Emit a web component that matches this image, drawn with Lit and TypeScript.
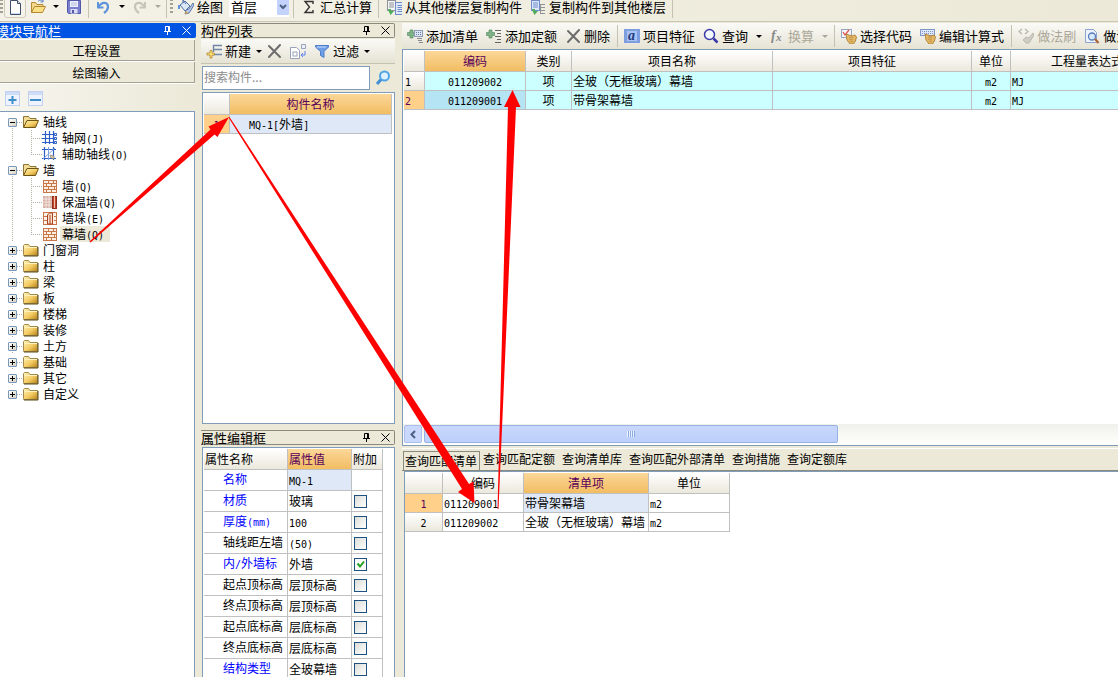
import { LitElement, html, svg, css, nothing } from "lit";
import { customElement, property } from "lit/decorators.js";
import { classMap } from "lit/directives/class-map.js";

/** Half-width runs are set in a narrow monospace so codes line up like a grid. */
const mix = (s: string) =>
  s.split(/([\x21-\x7e]+)/).map((p) => (/^[\x21-\x7e]/.test(p) ? html`<span class="lat">${p}</span>` : p));

const bricks = (stroke: string) => svg`
  <rect x="1.5" y="2.5" width="13" height="12" fill="#fdeee2" stroke=${stroke}/>
  <path d="M1 5.5h14M1 8.5h14M1 11.5h14M6.5 3v2.5M11.5 3v2.5M4.5 6v2.5M9.5 6v2.5M6.5 9v2.5M12.5 9v2.5M4.5 12v2.5M9.5 12v2.5" stroke=${stroke} fill="none"/>`;

const rows = (x: number, y: number) => svg`
  <rect x=${x} y=${y} width="8" height="12" fill="#dfe8f8" stroke="#6f8cc8"/>
  <path d="M${x + 2} ${y + 3}h5M${x + 2} ${y + 5}h5M${x + 2} ${y + 7}h5M${x + 2} ${y + 9}h5" stroke="#6f8cc8"/>`;

const hand = svg`
  <path d="M5 6l3 1 3 1 3-1 1.500 2-1 4-2 3H9L6 12z" fill="#e3b765" stroke="#a87a2c" stroke-width=".8"/>
  <path d="M8 9l4 1M8 11l4 1M9 13l3 1" stroke="#b98a3a" stroke-width=".7"/>`;

const plusGreen = svg`<path d="M3 2h3v2.500h2.500v3H6V10H3V7.500H.5v-3H3z" fill="#7fb287" stroke="#5b8f66" stroke-width=".7"/>`;

const icons: Record<string, unknown> = {
  new: svg`<path d="M3.500 1.500h7l3 3v11h-10z" fill="#fff" stroke="#40506c"/><path d="M10.500 1.500v3h3" fill="#cfe0f4" stroke="#40506c"/><path d="M4 14h9v1H4z" fill="#c7dcf3"/>`,
  open: svg`<path d="M1.500 13.500v-10h4l1.500 2h6v3" fill="#f6d98c" stroke="#b58a35"/><path d="M1.500 13.500l3-6h11l-3 6z" fill="#fbdf85" stroke="#b58a35"/><path d="M8 2.500c2-2 4-1.500 5 0M13 .5v2.500h-2.500" fill="none" stroke="#5c80c0"/>`,
  save: svg`<path d="M1.500 1.500h13v13h-12l-1-1z" fill="#7a7fd0" stroke="#5257a8"/><rect x="4" y="2" width="8" height="6" fill="#eef1fb"/><path d="M5 4h6M5 6h6" stroke="#b3bce0"/><rect x="4.500" y="10" width="7" height="4.500" fill="#d9dcf2"/><rect x="6" y="11" width="2" height="3" fill="#5257a8"/>`,
  undo: svg`<path d="M2 3v5.500h5.500" fill="none" stroke="#5f93dc" stroke-width="2"/><path d="M2.500 8C6 2 12 3 12 8c0 3-2 4.500-4 6" fill="none" stroke="#5f93dc" stroke-width="2.200"/>`,
  redo: svg`<path d="M13 3v5.500H7.500" fill="none" stroke="#c6c5ba" stroke-width="2"/><path d="M12.500 8C9 2 3 3 3 8c0 3 2 4.500 4 6" fill="none" stroke="#c6c5ba" stroke-width="2.200"/>`,
  paint: svg`<path d="M2 6l5-4 5 5-5 5z" fill="#dbe6f7" stroke="#4f6fa8"/><path d="M5 4V1l3 4" fill="none" stroke="#4f6fa8"/><path d="M1 6v4" stroke="#5f93dc" stroke-width="2"/><path d="M15 4l-4 6-3 1-1 4 4-1 2-3 3-5z" fill="#b9cbe8" stroke="#5c77ab"/><path d="M7 15l1-3 2 2z" fill="#e8ac36"/>`,
  sigma: svg`<path d="M12 5V2.500H4L8.500 8 4 13.500h8V11" fill="none" stroke="#333" stroke-width="1.400"/>`,
  copyFrom: svg`<rect x="1.500" y="1.500" width="8" height="10" fill="#f4f5f7" stroke="#8f9297"/><path d="M3 4h5M3 6h5M3 8h5" stroke="#8f9297"/>${rows(9.5, 3.5)}<path d="M2 10h3v2h3l-3.500 4L3 13z" fill="#4fae5b"/>`,
  copyTo: svg`<rect x="1.500" y="1.500" width="8" height="10" fill="#dce6fb" stroke="#6f8cc8"/><path d="M3 4h5M3 6h5M3 8h5" stroke="#6f8cc8"/><path d="M10 5.500h5M10 8.500h5M10 11.500h5M10 14.500h5M10.500 5v10" stroke="#8f9297"/><path d="M2 10h3v2h3l-3.500 4L3 13z" fill="#4fae5b"/>`,
  addNew: svg`<path d="M7 2.500h9M7 6.500h9M7 11.500h9M7.500 2v7" stroke="#7187a8" stroke-width="1.400"/><path d="M4 7.500h2v2.500h2.500v2H6v3H4v-3H1v-2h3z" fill="#ffe27a" stroke="#b1892f" stroke-width=".8"/>`,
  del: svg`<path d="M3 3l11 11M14 2L3 14" stroke="#6d6d6d" stroke-width="2" stroke-linecap="round"/>`,
  copyPage: svg`<path d="M.5 4.500h6l3 3v8h-9z" fill="#fff" stroke="#98a2b8"/><rect x="3" y="9" width="4" height="4" fill="none" stroke="#98a2b8"/><path d="M11.500 1.500h4v4h-4z" fill="#eef" stroke="#98a2b8"/><path d="M15 8v4h-4m2-2l-2 2 2 2" fill="none" stroke="#5b7ff0"/>`,
  filter: svg`<path d="M1.500 2.500h13v1.500L10 8.500v6L6.500 12.500v-4L1.500 4z" fill="#6f9fe6" stroke="#4d7cc6"/><path d="M3 4h9" stroke="#c9defa"/>`,
  search: svg`<circle cx="9.500" cy="6" r="4.500" fill="#dff1ff" stroke="#4fa6e6" stroke-width="2"/><path d="M6 9.500L2 14" stroke="#3f8fd6" stroke-width="3"/>`,
  addList: svg`${plusGreen}<rect x="7.500" y="2.500" width="8" height="6" fill="#dce5f3" stroke="#8c9bb5"/><path d="M9 4.500h1M11 4.500h1M13 4.500h1M9 6.500h1M11 6.500h1M13 6.500h1" stroke="#6b7c9c"/><path d="M10 10.500h5M11 12.500h4M12 14.500h4" stroke="#8a8a8a"/>`,
  addQuota: svg`${plusGreen}<path d="M9 2.500h6M11 5.500h4M9 8.500h6M11 11.500h4M9 14.500h6" stroke="#666"/>`,
  feature: svg`<rect x="0" y="1" width="16" height="14" fill="#7d9fe0"/><rect x="3" y="3" width="10" height="10" fill="#a9c3f4"/><text x="4" y="12" font-family="Liberation Serif, serif" font-style="italic" font-weight="bold" font-size="14" fill="#1f3b80">a</text>`,
  query: svg`<circle cx="6.500" cy="6.500" r="5" fill="#f4f8ff" stroke="#3a3aa8" stroke-width="1.500"/><path d="M10.500 10.500l4 4" stroke="#3a3aa8" stroke-width="2.500"/>`,
  fx: svg`<text x="2" y="12" font-family="Liberation Serif, serif" font-style="italic" font-weight="bold" font-size="14" fill="#8a8a8a">f</text><text x="7" y="13" font-family="Liberation Serif, serif" font-style="italic" font-weight="bold" font-size="11" fill="#8a8a8a">x</text>`,
  pick: svg`<rect x=".5" y="1.500" width="10" height="8" fill="#f3f5fa" stroke="#9aa6c0"/><path d="M2 4l2 3 4-5" fill="none" stroke="#e0554a" stroke-width="1.300"/>${hand}`,
  edit: svg`<rect x=".5" y="1.500" width="14" height="6" fill="#dfe8fa" stroke="#7f97c8"/><path d="M2 3.500h11M2 5.500h11" stroke="#7f97c8" stroke-dasharray="1 1"/>${hand}`,
  brush: svg`<path d="M4 1L1 3.500 4 6M7 1l3 2.500L7 6" fill="none" stroke="#b9b8ae" stroke-width="1.300"/><path d="M15 5l-4 5-3-1-3 3 3 3h3l2-3 3-5z" fill="#cfcec4" stroke="#b9b8ae"/>`,
  preview: svg`<path d="M1.500 1.500h8l3 3v10h-11z" fill="#eef4fd" stroke="#8ca4cf"/><circle cx="8" cy="8.500" r="3.500" fill="#d7ebff" stroke="#5a7cb8" stroke-width="1.300"/><path d="M11 11l3.500 4" stroke="#b0632e" stroke-width="2"/>`,
  plusBox: svg`<rect x=".5" y="1.500" width="14" height="14" fill="#eef3fd" stroke="#c3cff0"/><path d="M1 2h13v3H1z" fill="#cfdcf8"/><path d="M7.500 6v8M3.500 10h8" stroke="#3d8ec9" stroke-width="2"/>`,
  minusBox: svg`<rect x=".5" y="1.500" width="14" height="14" fill="#eef3fd" stroke="#c3cff0"/><path d="M1 2h13v3H1z" fill="#cfdcf8"/><path d="M2 10h11" stroke="#3d8ec9" stroke-width="2"/>`,
  folder: svg`<path d="M.5 12.500V3.500l1-1h4l1.500 2h7.500v9H.5z" fill="url(#fg)" stroke="#a08a4c"/><path d="M1 5.500h13" stroke="#fff2bd"/><path d="M15 5v9H1" fill="none" stroke="#5a4818"/>`,
  folderOpen: svg`<path d="M.5 13V2.500h5l1.500 2h6V7" fill="#f3dc93" stroke="#8c7434"/><path d="M.5 13.500L4 6.500h11.500l-3 7z" fill="url(#fg)" stroke="#6d5518"/>`,
  axis: svg`<path d="M3.500 1v13M7.500 1v13M11.500 1v13M0 4.500h13M0 8.500h13M0 12.500h13" stroke="#2c5fc6" stroke-width="1.200"/><path d="M12.500 3.500h2v2h-2zM12.500 7.500h2v2h-2zM12.500 11.500h2v2h-2z" fill="#fff" stroke="#2c5fc6"/>`,
  axisAux: svg`<path d="M2.500 1v13M11.500 1v13M0 3.500h14M0 12.500h14" stroke="#2c5fc6" stroke-width="1.200"/><path d="M6.500 1v13M1 13L13 2" stroke="#7ea0df"/><path d="M8 9l4 1v3l-3-1z" fill="#d8c4a0" stroke="#777" stroke-width=".6"/>`,
  wall: bricks("#c9764a"),
  wallIns: svg`<rect x="1" y="2" width="9" height="12" fill="#d9b0a4"/><path d="M1 5h9M1 8h9M1 11h9M4 2v12M7 2v12" stroke="#fff" stroke-width=".6"/><rect x="10.500" y="2.500" width="4" height="12" fill="#c0462c" stroke="#8c2f1c"/><path d="M12.500 2v12" stroke="#f3c0b0"/>`,
  wallPier: svg`<rect x="1.500" y="2.500" width="13" height="12" fill="#fff1e8" stroke="#c9764a"/><path d="M1 6.500h4M1 10.500h4M12 6.500h3M12 10.500h3" stroke="#c9764a"/><path d="M5.500 14V5l2-2h3v11zM8 5v9" fill="#fbe0cf" stroke="#a8421c"/>`,
};

const icon = (name: string) => html`<svg class="icon" width="16" height="16" viewBox="0 0 16 16" aria-hidden="true">
  <defs><linearGradient id="fg" x1="0" y1="0" x2="1" y2="1"><stop offset="0" stop-color="#fff3b8"/><stop offset=".55" stop-color="#f3cb62"/><stop offset="1" stop-color="#b57f17"/></linearGradient></defs>
  ${icons[name]}</svg>`;

const shared = css`
  * { box-sizing: border-box; }
  button { font: inherit; color: inherit; background: none; border: 0; padding: 0; margin: 0; white-space: nowrap; }
  svg { display: block; flex: none; }
  .lat { font-family: "DejaVu Sans Mono", monospace; font-size: 10px; line-height: 10px; }
`;

@customElement("tool-button")
class ToolButton extends LitElement {
  @property() icon = "";
  @property() label = "";
  @property() hint = "";
  @property({ type: Boolean }) menu = false;
  @property({ type: Boolean }) off = false;
  @property({ type: Boolean }) framed = false;
  static styles = [shared, css`
    :host { display: flex; flex: none; font-size: 13px; line-height: 18px; }
    .btn { display: flex; align-items: center; gap: 3px; padding: 2px 4px; }
    .drop { width: var(--caret-width, 12px); display: flex; align-items: center; justify-content: center; }
    .off { color: #aca899; }
    .framed { padding: 2px; border: 1px solid #cfccba; border-radius: 3px; background: #f5f3ea; }
  `];
  render() {
    return html`<button class=${classMap({ btn: true, off: this.off, framed: this.framed })} ?disabled=${this.off}
        aria-label=${this.label || this.hint}>${icon(this.icon)}${this.label ? html`<span>${this.label}</span>` : nothing}</button>
      ${this.menu ? html`<button class=${classMap({ drop: true, off: this.off })} ?disabled=${this.off} aria-label="展开">
        <svg width="6" height="3" viewBox="0 0 6 3"><path d="M0 0h6L3 3z" fill="currentColor"/></svg></button>` : nothing}`;
  }
}

@customElement("panel-title")
class PanelTitle extends LitElement {
  @property() text = "";
  @property({ type: Boolean, reflect: true }) active = false;
  static styles = [shared, css`
    :host { display: flex; align-items: center; height: 15px; border: 1px solid #8c8a7c; border-left: 0; border-radius: 0 2px 2px 0; font-size: 13px; line-height: 13px; color: #000; }
    :host([active]) { background: #0054e3; border-color: #0054e3; color: #fff; }
    .name { flex: 1; margin: 0; font: inherit; white-space: nowrap; }
    :host([active]) .name { margin-left: -4px; }
    .tools { display: flex; align-items: center; gap: 10px; padding-right: 4px; }
  `];
  render() {
    return html`<h2 class="name">${this.text}</h2>
      <span class="tools">
        <button aria-label="固定"><svg width="9" height="9" viewBox="0 0 9 9"><path d="M2.500 5V.5h4V5M1 5.500h7M4.500 6v3M5.500 1v4" fill="none" stroke="currentColor"/></svg></button>
        <button aria-label="关闭"><svg width="9" height="9" viewBox="0 0 9 9"><path d="M.5 .5l8 8M8.500 .5l-8 8" stroke="currentColor"/></svg></button>
      </span>`;
  }
}

interface Node { label: string; icon?: string; selected?: boolean; children?: Node[]; }
const tree: Node[] = [
  { label: "轴线", children: [{ label: "轴网(J)", icon: "axis" }, { label: "辅助轴线(O)", icon: "axisAux" }] },
  { label: "墙", children: [
    { label: "墙(Q)", icon: "wall" }, { label: "保温墙(Q)", icon: "wallIns" },
    { label: "墙垛(E)", icon: "wallPier" }, { label: "幕墙(Q)", icon: "wall", selected: true } ] },
  ...["门窗洞", "柱", "梁", "板", "楼梯", "装修", "土方", "基础", "其它", "自定义"].map((label) => ({ label })),
];

@customElement("module-tree")
class ModuleTree extends LitElement {
  static styles = [shared, css`
    :host { display: block; background: #fff; border: solid #7f9db9; border-width: 1px 1px 0 0; padding: 2px 0 0 8px; font-size: 12px; line-height: 16px; overflow: hidden; }
    ul { list-style: none; margin: 0; padding: 0; }
    .rail { background: repeating-linear-gradient(#b5b2a4 0 1px, transparent 1px 2px) 4px 8px / 1px 100% no-repeat; }
    .rail:last-child { background: none; }
    .line { display: flex; align-items: center; height: 16px; }
    .toggle { width: 9px; height: 9px; flex: none; border: 1px solid #7898b5; border-radius: 1px; background: linear-gradient(135deg, #fff, #d8d2c4); display: flex; align-items: center; justify-content: center; }
    .dash { width: 6px; height: 1px; flex: none; background: repeating-linear-gradient(90deg, #b5b2a4 0 1px, transparent 1px 2px); }
    .label { margin-left: 2px; padding: 0 2px; white-space: nowrap; }
    .selected { background: #ece9d8; padding-right: 6px; }
    .kids { padding-left: 23px; }
    .kid { display: flex; align-items: center; height: 16px; background: repeating-linear-gradient(#b5b2a4 0 1px, transparent 1px 2px) 0 0 / 1px 100% no-repeat; }
    .kid:last-child { background-size: 1px 8px; }
    .kid .dash { width: 11px; }
  `];
  private toggle(open: boolean) {
    return html`<button class="toggle" aria-label=${open ? "折叠" : "展开"}><svg width="5" height="5" viewBox="0 0 5 5"><path d=${open ? "M0 2.500h5" : "M0 2.500h5M2.500 0v5"} stroke="#000"/></svg></button>`;
  }
  render() {
    return html`<ul role="tree">${tree.map((n) => html`<li class="rail" role="treeitem">
      <div class="line">${this.toggle(!!n.children)}<span class="dash"></span>${icon(n.children ? "folderOpen" : "folder")}<span class="label">${n.label}</span></div>
      ${n.children ? html`<ul class="kids" role="group">${n.children.map((c) => html`<li class="kid" role="treeitem"><span class="dash"></span>${icon(c.icon!)}<span class=${classMap({ label: true, selected: !!c.selected })}>${mix(c.label)}</span></li>`)}</ul>` : nothing}
    </li>`)}</ul>`;
  }
}

const props: [string, string, boolean, boolean | null][] = [
  ["名称", "MQ-1", true, null],
  ["材质", "玻璃", true, false],
  ["厚度(mm)", "100", true, false],
  ["轴线距左墙", "(50)", false, false],
  ["内/外墙标", "外墙", true, true],
  ["起点顶标高", "层顶标高", false, false],
  ["终点顶标高", "层顶标高", false, false],
  ["起点底标高", "层底标高", false, false],
  ["终点底标高", "层底标高", false, false],
  ["结构类型", "全玻幕墙", true, false],
];

const items = [
  { no: "1", code: "011209002", name: "全玻（无框玻璃）幕墙", active: false },
  { no: "2", code: "011209001", name: "带骨架幕墙", active: true },
];

const matches = [
  { no: "1", code: "011209001", name: "带骨架幕墙", active: true },
  { no: "2", code: "011209002", name: "全玻（无框玻璃）幕墙", active: false },
];

@customElement("app-root")
class AppRoot extends LitElement {
  static styles = [shared, css`
    :host { display: flex; flex-direction: column; height: 100vh; overflow: hidden; position: relative; background: #ece9d8; color: #000; font: 12px/16px "Noto Sans CJK SC", sans-serif; }

    .topbar { display: flex; align-items: center; flex: none; height: 29px; margin-top: -7px; padding-bottom: 1px; border-bottom: 1px solid #c9c6b4; background: linear-gradient(90deg, #f4f2e8, #ece9d8); font-size: 13px; overflow: hidden; }
    .grip { width: 3px; height: 16px; flex: none; margin-right: 1px; background: repeating-linear-gradient(#a5a293 0 2px, transparent 2px 4px); }
    .sep { width: 1px; height: 22px; flex: none; margin: 0 3px 0 2px; background: #c5c2b2; }
    .floor { display: flex; flex: none; width: 60px; margin: 0 2px; background: #fff; align-items: center; }
    .floor select { appearance: none; flex: 1; min-width: 0; height: 20px; border: 0; padding: 0 0 0 2px; background: none; font: inherit; line-height: 20px; color: #000; }
    .chevron { width: 12px; height: 16px; flex: none; display: flex; align-items: center; justify-content: center; background: #c3d3fb; border-radius: 1px; pointer-events: none; }

    .main { flex: 1; min-height: 0; display: grid; grid-template-columns: 196px 194px minmax(0, 1fr); padding-top: 1px; }
    .column { display: flex; flex-direction: column; min-height: 0; min-width: 0; }
    .middle { margin: 0 -5px 0 5px; gap: 6px; }
    .right { margin-left: 12px; gap: 2px; }

    .stack { height: 22px; flex: none; margin-right: 1px; padding-right: 2px; border: solid #fff; border-width: 1px 0 0; box-shadow: inset -1px -1px #a5a293; text-align: center; }
    .first { margin-top: 1px; }
    .treebar { display: flex; align-items: center; gap: 7px; flex: none; height: 28px; margin-right: 1px; padding-left: 5px; border-top: 1px solid #fff; background: linear-gradient(90deg, #f6f5ee, #ece9d8); }
    module-tree { flex: 1; margin-right: 1px; }

    .list { flex: 401 1 0; min-height: 0; display: flex; flex-direction: column; }
    .props { flex: 247 1 0; min-height: 0; display: flex; flex-direction: column; gap: 2px; overflow: hidden; }
    .toolbar { display: flex; align-items: center; flex: none; height: 26px; background: linear-gradient(#fafaf7, #e6e3d4); overflow: hidden; }
    .list .toolbar { --caret-width: 7px; height: 25px; margin-top: 1px; padding-left: 1px; border-bottom: 1px solid #c5c2b2; }
    .find { display: flex; align-items: center; flex: none; gap: 5px; margin: 2px 4px 2px 1px; }
    .find input { flex: 1; min-width: 0; height: 24px; padding: 0 1px 4px; border: 1px solid #7f9db9; background: #fff; font: inherit; color: #000; }
    .find input::placeholder { color: #8c8c8c; opacity: 1; }
    .box { flex: 1; min-height: 0; margin: 0 0 0 1px; padding: 1px; border: 1px solid #7f9db9; background: #fff; overflow: hidden; }
    .props .box { border-bottom: 0; }

    table { table-layout: fixed; border-collapse: separate; border-spacing: 0; line-height: 16px; }
    th, td { height: 19px; padding: 0 1px; border: solid #c0c0c0; border-width: 0 1px 1px 0; font-weight: normal; text-align: left; white-space: nowrap; overflow: hidden; }
    th { background: linear-gradient(#fff, #ebe8dc); text-align: center; }
    thead th { height: 21px; }
    .mid { text-align: center; }
    .hot { background: linear-gradient(#fbd799, #f2bd62); color: #5a005a; }
    .mark { background: #ffd08a; color: #5a005a; }
    .soft { background: #dfe8f6; }
    .items { width: 760px; }
    .items td { background: #ccffff; }
    .items tbody th { text-align: left; }
    .items .picked { background: #b5e4f4; }
    .component { width: 188px; }
    .component td { padding-left: 19px; }
    .property { width: 179px; }
    .property th { text-align: left; }
    .property td { height: 21px; }
    .property .key { padding-left: 19px; padding-bottom: 3px; }
    .property .tick { padding-left: 2px; }
    .blue { color: #0000ff; }
    .property input { appearance: none; display: block; width: 13px; height: 13px; margin: 0; border: 1px solid #1c5180; background: linear-gradient(135deg, #dcdcd7, #fff); }
    .property input:checked { background: url("data:image/svg+xml,%3Csvg xmlns='http://www.w3.org/2000/svg' width='11' height='11'%3E%3Cpath d='M2.500 4.500l2.500 3 4-5' fill='none' stroke='%2321a121' stroke-width='2'/%3E%3C/svg%3E") #fbfbf9; }
    .match { width: 325px; }

    .sheet { flex: 424 1 0; min-height: 0; display: flex; flex-direction: column; }
    .sheet .toolbar { --caret-width: 13px; padding-left: 1px; }
    .sheet .grid { flex: 1; min-height: 0; padding: 1px 0 0 1px; border: solid #7f9db9; border-width: 1px 0 0 1px; background: #fff; overflow: hidden; }
    .sheet .sep { margin: 0 2px 0 3px; }
    .scroll { display: flex; flex: none; gap: 2px; height: 22px; padding: 1px 0 2px 1px; border: solid #7f9db9; border-width: 0 0 1px 1px; background: linear-gradient(#f1f1ec, #fefefc); }
    .arrow { width: 18px; display: flex; align-items: center; justify-content: center; border: 1px solid #a9bff0; border-radius: 2px; background: #c9d8fc; }
    .thumb { flex: 0 0 58%; display: flex; align-items: center; justify-content: center; border: 1px solid #98b1e4; border-radius: 2px; background: linear-gradient(#c9d7fc, #bcd0fb); }
    .ridges { width: 8px; height: 6px; background: repeating-linear-gradient(90deg, #eef4fe 0 1px, #8caae0 1px 2px); }

    .lookup { flex: 228 1 0; min-height: 0; display: flex; flex-direction: column; border-top: 1px solid #fff; }
    .tabs { display: flex; flex: none; gap: 1px; height: 22px; padding: 0 1px; overflow: hidden; border-bottom: 1px solid #8c8a7c; }
    .tab { padding: 0 3px 0 2px; line-height: 20px; display: flex; }
    .tab + .tab { margin-right: 1px; }
    .current { margin-top: 2px; padding: 0 2px 0 1px; border: 1px solid #8c8a7c; border-width: 1px 1px 0; line-height: 18px; }
    .lookup .grid { flex: 1; min-height: 0; margin-left: 2px; padding: 1px 0 0; border: solid #7f9db9; border-width: 1px 0 0 1px; background: #fff; overflow: hidden; }

    .marks { position: absolute; left: 0; top: 0; pointer-events: none; }
  `];

  private topbar() {
    return html`<header class="topbar">
      <span class="grip"></span>
      <tool-button icon="new" hint="新建" framed></tool-button>
      <tool-button icon="open" hint="打开" menu></tool-button>
      <tool-button icon="save" hint="保存"></tool-button>
      <span class="sep"></span>
      <tool-button icon="undo" hint="撤销" menu></tool-button>
      <tool-button icon="redo" hint="恢复" menu off></tool-button>
      <span class="sep"></span>
      <span class="grip"></span>
      <tool-button icon="paint" label="绘图"></tool-button>
      <label class="floor"><select aria-label="楼层"><option>首层</option></select>
        <span class="chevron"><svg width="8" height="6" viewBox="0 0 8 6"><path d="M1 1l3 3 3-3" fill="none" stroke="#4d6185" stroke-width="2"/></svg></span></label>
      <span class="sep"></span>
      <tool-button icon="sigma" label="汇总计算"></tool-button>
      <span class="sep"></span>
      <tool-button icon="copyFrom" label="从其他楼层复制构件"></tool-button>
      <tool-button icon="copyTo" label="复制构件到其他楼层"></tool-button>
      <span class="sep"></span>
    </header>`;
  }

  private left() {
    return html`<nav class="column">
      <panel-title text="模块导航栏" active></panel-title>
      <button class="stack first">工程设置</button>
      <button class="stack">绘图输入</button>
      <div class="treebar"><button aria-label="全部展开">${icon("plusBox")}</button><button aria-label="全部折叠">${icon("minusBox")}</button></div>
      <module-tree></module-tree>
    </nav>`;
  }

  private middle() {
    return html`<div class="column middle">
      <section class="list">
        <panel-title text="构件列表"></panel-title>
        <div class="toolbar">
          <tool-button icon="addNew" label="新建" menu></tool-button>
          <tool-button icon="del" hint="删除"></tool-button>
          <tool-button icon="copyPage" hint="复制"></tool-button>
          <tool-button icon="filter" label="过滤" menu></tool-button>
        </div>
        <div class="find"><input type="text" aria-label="搜索构件" placeholder="搜索构件..."><button aria-label="搜索">${icon("search")}</button></div>
        <div class="box">
          <table class="component">
            <colgroup><col width="26"><col width="162"></colgroup>
            <thead><tr><th></th><th class="hot">构件名称</th></tr></thead>
            <tbody><tr><th class="mark">${mix("1")}</th><td class="soft">${mix("MQ-1[外墙]")}</td></tr></tbody>
          </table>
        </div>
      </section>
      <section class="props">
        <panel-title text="属性编辑框"></panel-title>
        <div class="box">
          <table class="property">
            <colgroup><col width="84"><col width="64"><col width="31"></colgroup>
            <thead><tr><th>属性名称</th><th class="hot">属性值</th><th>附加</th></tr></thead>
            <tbody>${props.map(([k, v, blue, on]) => html`<tr>
              <td class=${classMap({ key: true, blue })}>${mix(k)}</td>
              <td class=${classMap({ soft: on === null })}>${mix(v)}</td>
              <td class="tick">${on === null ? nothing : html`<input type="checkbox" aria-label=${"附加 " + k} .checked=${on}>`}</td></tr>`)}</tbody>
          </table>
        </div>
      </section>
    </div>`;
  }

  private right() {
    return html`<div class="column right">
      <section class="sheet">
        <div class="toolbar">
          <tool-button icon="addList" label="添加清单"></tool-button>
          <tool-button icon="addQuota" label="添加定额"></tool-button>
          <tool-button icon="del" label="删除"></tool-button>
          <span class="sep"></span>
          <tool-button icon="feature" label="项目特征"></tool-button>
          <tool-button icon="query" label="查询" menu></tool-button>
          <tool-button icon="fx" label="换算" menu off></tool-button>
          <span class="sep"></span>
          <tool-button icon="pick" label="选择代码"></tool-button>
          <tool-button icon="edit" label="编辑计算式"></tool-button>
          <span class="sep"></span>
          <tool-button icon="brush" label="做法刷" off></tool-button>
          <tool-button icon="preview" label="做法查询"></tool-button>
        </div>
        <div class="grid">
          <table class="items">
            <colgroup><col width="21"><col width="101"><col width="46"><col width="201"><col width="199"><col width="39"><col width="153"></colgroup>
            <thead><tr><th></th><th class="hot">编码</th><th>类别</th><th>项目名称</th><th>项目特征</th><th>单位</th><th>工程量表达式</th></tr></thead>
            <tbody>${items.map((r) => html`<tr>
              <th class=${classMap({ mark: r.active })}>${mix(r.no)}</th>
              <td class=${classMap({ mid: true, picked: r.active })}>${mix(r.code)}</td>
              <td class="mid">项</td><td>${r.name}</td><td></td><td class="mid">${mix("m2")}</td><td>${mix("MJ")}</td></tr>`)}</tbody>
          </table>
        </div>
        <div class="scroll">
          <button class="arrow" aria-label="向左滚动"><svg width="6" height="9" viewBox="0 0 6 9"><path d="M5 1L1.500 4.500 5 8" fill="none" stroke="#4d6185" stroke-width="2"/></svg></button>
          <div class="thumb"><span class="ridges"></span></div>
        </div>
      </section>
      <section class="lookup">
        <div class="tabs" role="tablist">${["查询匹配清单", "查询匹配定额", "查询清单库", "查询匹配外部清单", "查询措施", "查询定额库"].map((t, i) =>
          html`<button role="tab" aria-selected=${i === 0} class=${classMap({ tab: true, current: i === 0 })}>${t}</button>`)}</div>
        <div class="grid">
          <table class="match">
            <colgroup><col width="38"><col width="81"><col width="125"><col width="81"></colgroup>
            <thead><tr><th></th><th>编码</th><th class="hot">清单项</th><th>单位</th></tr></thead>
            <tbody>${matches.map((r) => html`<tr>
              <th class=${classMap({ mark: r.active })}>${mix(r.no)}</th><td>${mix(r.code)}</td>
              <td class=${classMap({ soft: r.active })}>${r.name}</td><td>${mix("m2")}</td></tr>`)}</tbody>
          </table>
        </div>
      </section>
    </div>`;
  }

  render() {
    return html`${this.topbar()}
      <main class="main">${this.left()}${this.middle()}${this.right()}</main>
      <svg class="marks" width="600" height="540" viewBox="0 0 600 540" fill="#f00" aria-hidden="true">
        <path d="M89.500 241.500L210.500 129.500 208.500 126.500 229 117 217.500 137 214.500 134.500 90.500 242.500z"/>
        <path d="M228.500 117.500L229.500 117 469 484 473.500 481.500 474.500 503 458 492 462 489z"/>
        <path d="M497.500 509L508 107H504L512.500 90 520.500 107H516L498.500 509z"/>
      </svg>`;
  }
}
